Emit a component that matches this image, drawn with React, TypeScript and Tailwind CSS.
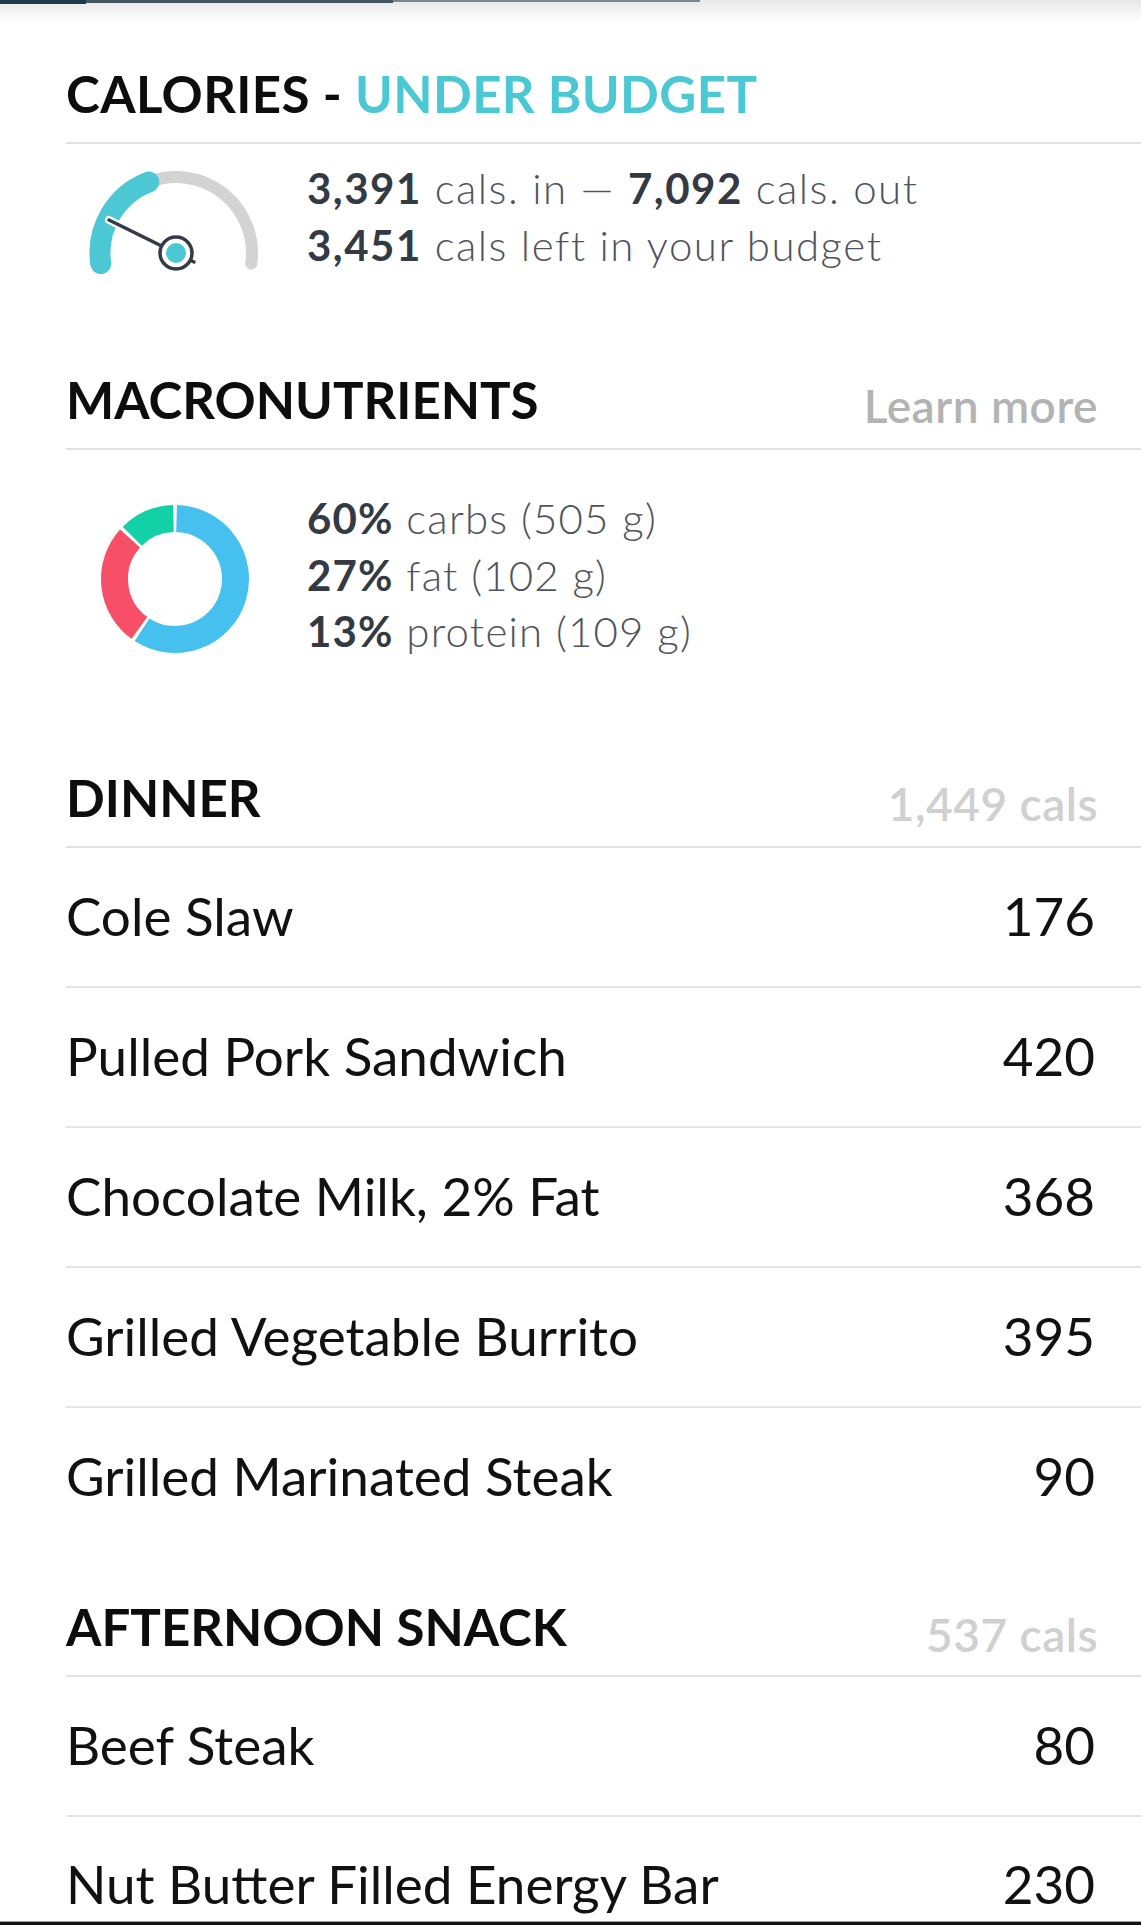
import { FC, ReactNode } from "react";

const arc = (cx: number, cy: number, r: number, a0: number, a1: number) => {
  const p = (a: number) => [cx + r * Math.sin((a * Math.PI) / 180), cy - r * Math.cos((a * Math.PI) / 180)];
  const [x0, y0] = p(a0);
  const [x1, y1] = p(a1);
  const large = a1 - a0 > 180 ? 1 : 0;
  return `M${x0} ${y0} A${r} ${r} 0 ${large} 1 ${x1} ${y1}`;
};

const Gauge: FC = () => (
  <svg width="240" height="120" viewBox="0 0 240 120">
    <path d={arc(110, 96, 76, -21, 98)} fill="none" stroke="#d3d3d3" strokeWidth="12" strokeLinecap="round" />
    <path d={arc(110, 96, 76, -98, -21)} fill="none" stroke="#4cc8d4" strokeWidth="21" strokeLinecap="round" />
    <line x1="43" y1="63" x2="128" y2="105" stroke="#ffffff" strokeWidth="8" strokeLinecap="round" />
    <line x1="43" y1="63" x2="128" y2="105" stroke="#353b45" strokeWidth="3.5" strokeLinecap="round" />
    <circle cx="110" cy="96" r="16" fill="#ffffff" stroke="#353b45" strokeWidth="3.5" />
    <circle cx="110" cy="96" r="10" fill="#4cc8d4" />
  </svg>
);

const Donut: FC = () => (
  <svg width="240" height="170" viewBox="0 0 240 170">
    <path d={arc(109, 85, 60.5, 1.5, 213)} fill="none" stroke="#45c0ef" strokeWidth="27" />
    <path d={arc(109, 85, 60.5, 216, 312)} fill="none" stroke="#f84f69" strokeWidth="27" />
    <path d={arc(109, 85, 60.5, 315, 358.5)} fill="none" stroke="#13d0a6" strokeWidth="27" />
  </svg>
);

const Header: FC<{ title: ReactNode; right?: ReactNode; rightClass?: string }> = ({ title, right, rightClass }) => (
  <div className="flex items-end justify-between border-b-2 border-[#e2e2e2] pb-[23px] pr-[43px]">
    <h2 className="text-[51px] font-bold leading-none text-[#0d0d0d]">{title}</h2>
    {right && <span className={rightClass}>{right}</span>}
  </div>
);

const Row: FC<{ name: string; cals: number; last?: boolean }> = ({ name, cals, last }) => (
  <div
    className={
      last
        ? "flex justify-between pt-[41px] pb-[44px] pr-[46px] text-[53px] leading-none text-[#111]"
        : "flex justify-between border-b-2 border-[#e4e4e4] pt-[41px] pb-[44px] pr-[46px] text-[53px] leading-none text-[#111]"
    }
  >
    <span>{name}</span>
    <span>{cals}</span>
  </div>
);

const Num: FC<{ children: ReactNode }> = ({ children }) => (
  <b className="font-bold text-[#343a43]">{children}</b>
);

const dinner = [
  { name: "Cole Slaw", cals: 176 },
  { name: "Pulled Pork Sandwich", cals: 420 },
  { name: "Chocolate Milk, 2% Fat", cals: 368 },
  { name: "Grilled Vegetable Burrito", cals: 395 },
  { name: "Grilled Marinated Steak", cals: 90 },
];

const App: FC = () => {
  return (
    <div className="min-h-[1927px] bg-white font-['Lato','Liberation_Sans',sans-serif]">
      <div className="h-[22px] bg-linear-to-b from-[#e8e8e8] to-white">
        <div className="flex items-start">
          <div className="h-[4px] w-[86px] bg-[#1d3b4a]" />
          <div className="h-[3px] w-[307px] bg-[#44555f]" />
          <div className="h-[2px] w-[307px] bg-[#7a858d]" />
        </div>
      </div>

      <div className="pl-[66px]">
        <section className="mt-[46px]">
          <Header
            title={
              <span className="tracking-[0.4px]">
                CALORIES - <span className="text-[#4cc8d4]">UNDER BUDGET</span>
              </span>
            }
          />
          <div className="mt-[13px] flex items-center">
            <div className="w-[241px] shrink-0">
              <Gauge />
            </div>
            <div className="text-[42px] font-light leading-[57px] tracking-[1.5px] text-[#4f545b]">
              <p>
                <Num>3,391</Num> cals. in — <Num>7,092</Num> cals. out
              </p>
              <p>
                <Num>3,451</Num> cals left in your budget
              </p>
            </div>
          </div>
        </section>

        <section className="mt-[97px]">
          <Header
            title="MACRONUTRIENTS"
            right="Learn more"
            rightClass="translate-y-[4px] text-[46px] font-semibold leading-none tracking-[0.5px] text-[#b3b3b3]"
          />
          <div className="mt-[44px] flex items-start">
            <div className="w-[241px] shrink-0">
              <Donut />
            </div>
            <div className="-mt-[4px] text-[42px] font-light leading-[56.5px] tracking-[1.2px] text-[#4f545b]">
              <p>
                <Num>60%</Num> carbs (505 g)
              </p>
              <p>
                <Num>27%</Num> fat (102 g)
              </p>
              <p>
                <Num>13%</Num> protein (109 g)
              </p>
            </div>
          </div>
        </section>

        <section className="mt-[108px]">
          <Header
            title="DINNER"
            right="1,449 cals"
            rightClass="translate-y-[4px] text-[46px] font-semibold leading-none tracking-[0.5px] text-[#d0d0d0]"
          />
          {dinner.map((d, i) => (
            <Row key={d.name} name={d.name} cals={d.cals} last={i === dinner.length - 1} />
          ))}
        </section>

        <section className="mt-[55px]">
          <Header
            title="AFTERNOON SNACK"
            right="537 cals"
            rightClass="translate-y-[6px] text-[46px] font-semibold leading-none tracking-[0.5px] text-[#d0d0d0]"
          />
          <Row name="Beef Steak" cals={80} />
          <div className="flex justify-between pt-[40px] pb-[11px] pr-[46px] text-[53px] leading-none text-[#111]">
            <span>Nut Butter Filled Energy Bar</span>
            <span>230</span>
          </div>
        </section>
      </div>
      <div className="h-px bg-[#a0a0a0]" />
      <div className="h-[3px] bg-[#111]" />
    </div>
  );
};

export default App;
